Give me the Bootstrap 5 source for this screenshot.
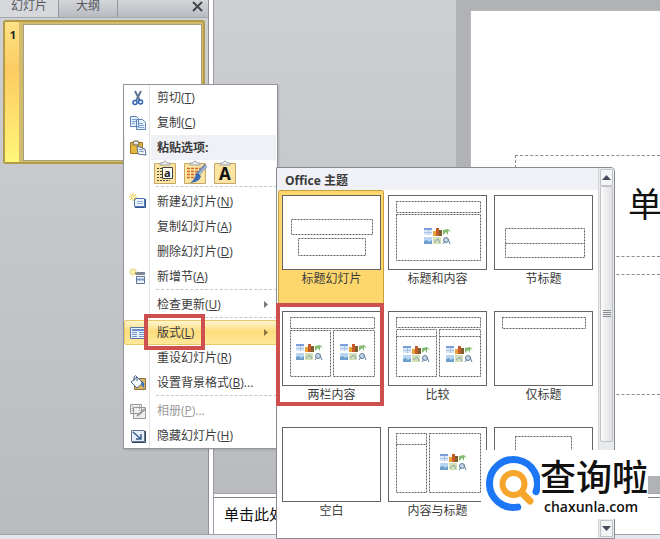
<!DOCTYPE html>
<html lang="zh-CN">
<head>
<meta charset="utf-8">
<meta name="viewport" content="width=device-width, initial-scale=1">
<title>版式</title>
<link rel="stylesheet" href="https://cdn.jsdelivr.net/npm/bootstrap@5.3.0/dist/css/bootstrap.min.css">
<style>
  body { font: 12px/16px "Open Sans", "Noto Sans CJK SC", sans-serif; color: #3b3b3b; background: #c7c9cd; }
  button { font: inherit; color: inherit; }
  svg { display: block; flex: none; }
  u { text-underline-offset: 1px; }

  .side-pane { width: 209px; border-right: 1px solid #8d9096; background: linear-gradient(#cfd1d5, #c5c7cb 40%, #b9bbbe); }
  .tab-strip { height: 18px; background: linear-gradient(#d3d5d9, #b8bbc0); border-bottom: 1px solid #a3a6ac; }
  .pane-tab { width: 59px; padding: 0 0 5px; border: 0; border-right: 1px solid #94979d; background: none; color: #55585e; line-height: 12px; }
  .pane-tab.active { background: #d6d8dc; }
  .pane-close { padding: 0 5px 5px; border: 0; background: none; }
  .slide-item { margin: 2px 3px; height: 144px; border: 2px solid #b39c48; border-radius: 3px; background: #d2bb6c; }
  .slide-number { width: 14px; padding: 5px 0 0 2px; background: linear-gradient(#fde184, #fdcb62 35%, #fff67a); font-weight: 700; font-size: 11px; color: #222; text-align: center; }
  .slide-mini { margin: 2px 1px 1px 4px; border: 1px solid #a6a07e; background: #fff; }

  .splitter-v { width: 5px; background: #fff; border-right: 1px solid #989ba1; }
  .canvas { background: linear-gradient(#cdcfd3, #c3c5c9 50%, #b9bbbe); }
  .canvas-gap { width: 242px; }
  .slide-edge { background: #b0b2b6; padding: 10px 0 17px 14px; }
  .slide-page { background: #fff; border-left: 1px solid #b8b8b8; border-top: 1px solid #b8b8b8; padding: 144px 0 0 44px; color: #111; }
  .placeholder-box { border: 1px dashed #8c8c8c; border-right: 0; }
  .title-box { height: 102px; margin-bottom: 17px; font-size: 34px; font-weight: 400; padding-left: 112px; line-height: 96px; }
  .subtitle-box { height: 121px; }
  .splitter-h { height: 5px; background: #fff; border-top: 1px solid #a2a4a8; border-bottom: 1px solid #808287; }
  .notes { height: 36px; background: #fff; padding-left: 10px; font-size: 15px; color: #111; line-height: 32px; }
  .status { height: 5px; background: #e4e7ec; border-top: 1px solid #9fa2a8; }

  .context-menu { left: 123px; top: 84px; width: 155px; border: 1px solid #92959b; background: linear-gradient(90deg, #fff 25px, #e3e4e8 25px, #e3e4e8 26px, #fff 26px); box-shadow: 1px 1px 2px #0002; }
  .menu-row { height: 25px; width: 100%; padding: 0 0 0 4px; border: 1px solid transparent; background: none; white-space: nowrap; gap: 10px; text-align: left; }
  .menu-row svg { width: 18px; height: 18px; }
  .menu-row .arrow { width: 4px; height: 7px; margin-right: 8px; }
  .menu-head { background: linear-gradient(90deg, transparent 26px, #f0f1f6 26px); font-weight: 700; }
  .menu-row.hot { border-color: #e8c867; border-radius: 2px; background: linear-gradient(#fff6d0, #fddc7c 45%, #fee79a); }
  .menu-row:disabled { color: #9a9a9a; }
  .paste-row { height: 26px; padding-left: 30px; gap: 7px; }
  .paste-row button { border: 0; padding: 0; background: none; }
  .menu-sep { height: 3px; margin-left: 32px; border-top: 1px dashed #c4c6ca; }

  .gallery { left: 276px; top: 167px; bottom: 0; width: 339px; border: 1px solid #888b91; border-radius: 0 4px 0 0; background: #fff; }
  .gallery-head { height: 22px; padding: 4px 0 0 8px; background: #f0f1f6; font-weight: 700; line-height: 18px; }
  .gallery-grid { display: grid; grid-template-columns: repeat(3, 106px); grid-auto-rows: 116px; padding-left: 1px; }
  .layout-tile { padding: 4px 3px 0; border: 1px solid transparent; background: none; text-align: center; }
  .layout-tile.chosen { background: #fdd76c; border-color: #c9a13c; border-radius: 2px; }
  .layout-tile span { width: 99px; line-height: 17px; white-space: nowrap; }
  .thumb rect { fill: #fff; stroke: #636363; }
  .thumb > path { fill: none; stroke: #606060; stroke-dasharray: 2 1; }
  .scroll-rail { width: 16px; padding: 1px; background: #e9eaec; border-left: 1px solid #d3d5d8; }
  .scroll-rail button { border: 1px solid #c0c2c6; background: #f4f5f7; padding: 0; height: 17px; border-radius: 1px; }
  .scroll-knob { height: 256px; border: 1px solid #c0c2c6; border-radius: 2px; background: linear-gradient(90deg, #fafafa, #dfe0e3); }

  .callout-frame { border: 4px solid #cf4f4f; pointer-events: none; }
  .frame-menu { left: 144px; top: 314px; width: 61px; height: 36px; }
  .frame-tile { left: 276px; top: 303px; width: 108px; height: 103px; }

  .site-mark { left: 481px; top: 450px; width: 167px; height: 69px; background: #fff; color: #111; }
  .mark-name { font: 500 36px/44px "Noto Sans CJK SC", sans-serif; }
  .mark-url { font: 600 14px/20px "Open Sans", sans-serif; padding-left: 4px; }
</style>
<script src="https://cdn.jsdelivr.net/npm/bootstrap@5.3.0/dist/js/bootstrap.bundle.min.js"></script>
</head>
<body class="overflow-hidden">
<svg width="0" height="0" class="position-absolute" aria-hidden="true">
  <defs>
    <g id="content-icons" fill="none">
      <path d="M0 1h8v7H0z" fill="#dce8f7"/><path d="M0 1h8v2H0z" fill="#7c9fdb"/><path d="M0 5.500h8M4.500 3v5" stroke="#a9c2e6"/>
      <path d="M9 4h4v5H9z" fill="#e9a13a"/><path d="M12 1h3v8h-3z" fill="#c65a2c"/><path d="M15 3h3v6h-3z" fill="#7d5e2c"/>
      <path d="M19 3l5-1 3 3-3-1v4l-2-3-3 3z" fill="#83b971"/>
      <path d="M0 10h8v7H0z" fill="#b8d6f2"/><path d="M0 17v-3l3-1 2 2 3-2v4z" fill="#6e9fcc"/>
      <path d="M9 10h8v7H9z" fill="#d4dfb5"/><path d="M10 15l4-3 2 4" stroke="#7fa5b4"/>
      <circle cx="22" cy="13" r="2.500" fill="#c9d7e8" stroke="#60809e"/><path d="M19 17l2-3M24 12l2 5" stroke="#60809e"/>
    </g>
    <g id="clip-board"><path d="M.5 3.500h21v20H.5z" fill="#fbe3a2" stroke="#c9a764"/><path d="M6 5V3h3q2-4 4 0h3v2z" fill="#eef0f2" stroke="#9da0a5"/></g>
    <g id="spark"><path d="M4 0v8M0 4h8M1 1l6 6M7 1L1 7" stroke="#e8c640" stroke-width="1"/><circle cx="4" cy="4" r="1.500" fill="#fff9b8"/></g>
  </defs>
</svg>

<div class="vh-100 d-flex flex-column position-relative overflow-hidden">
  <main class="d-flex flex-grow-1 overflow-hidden">
    <aside class="side-pane flex-shrink-0">
      <div class="tab-strip d-flex align-items-stretch overflow-hidden">
        <button class="pane-tab active d-flex align-items-end justify-content-center" type="button">幻灯片</button>
        <button class="pane-tab d-flex align-items-end justify-content-center" type="button">大纲</button>
        <button class="pane-close ms-auto d-flex align-items-end" type="button" aria-label="关闭"><svg width="11" height="11" fill="none" stroke="#44474c" stroke-width="2"><path d="M1 1l9 9M10 1l-9 9"/></svg></button>
      </div>
      <div class="slide-item d-flex">
        <div class="slide-number">1</div>
        <div class="slide-mini flex-grow-1"></div>
      </div>
    </aside>
    <div class="splitter-v flex-shrink-0"></div>
    <section class="d-flex flex-column flex-grow-1 overflow-hidden">
      <div class="canvas d-flex flex-grow-1 overflow-hidden">
        <div class="canvas-gap flex-shrink-0"></div>
        <div class="slide-edge d-flex flex-grow-1 overflow-hidden">
          <div class="slide-page flex-grow-1 overflow-hidden">
            <div class="placeholder-box title-box">单</div>
            <div class="placeholder-box subtitle-box"></div>
          </div>
        </div>
      </div>
      <div class="splitter-h flex-shrink-0"></div>
      <div class="notes flex-shrink-0">单击此处</div>
    </section>
  </main>
  <footer class="status flex-shrink-0"></footer>

  <nav class="context-menu position-absolute" aria-label="幻灯片菜单">
    <button class="menu-row d-flex align-items-center" type="button"><svg viewBox="0 0 18 18" fill="none"><path d="M6 2l5 10M12 2L7 12" stroke="#5f7896" stroke-width="2"/><circle cx="6" cy="13.500" r="2" stroke="#2e62b5" stroke-width="1.500"/><circle cx="11.500" cy="13" r="2" stroke="#2e62b5" stroke-width="1.500"/></svg><span>剪切(<u>T</u>)</span></button>
    <button class="menu-row d-flex align-items-center" type="button"><svg viewBox="0 0 18 18" fill="#e4effb" stroke="#5b83b5"><path d="M1.500 2.500h6l2 2v8h-8zM7.500 5.500h6l3 3v7h-9z"/><path d="M3 5.500h4M3 7.500h4M3 9.500h3M9 9.500h5M9 11.500h6M9 13.500h6" stroke="#7ba4d8"/></svg><span>复制(<u>C</u>)</span></button>
    <div class="menu-row menu-head d-flex align-items-center"><svg viewBox="0 0 18 18"><path d="M1.500 3.500h12v11h-12z" fill="#e6b73e" stroke="#9c7422"/><path d="M4 4l1-2h4l1 2v2H4z" fill="#dfe3e8" stroke="#75602e"/><path d="M8 7l8 3 1 6-8-1z" fill="#fff" stroke="#526b8e"/><path d="M9.500 10l5 1M10 12l5 1" stroke="#6f94c4"/></svg><span>粘贴选项:</span></div>
    <div class="paste-row d-flex align-items-start">
      <button type="button" aria-label="使用目标主题"><svg width="23" height="24"><use href="#clip-board"/><path d="M3 8.500h5M3 11.500h5M3 14.500h5M3 17.500h5M3 20.500h13" stroke="#4b4b4b" stroke-dasharray="2 1"/><path d="M8.500 7.500h10v11h-10z" fill="#fff" stroke="#3e4146"/><text x="10" y="17" font-size="11" font-weight="700" fill="#222">a</text></svg></button>
      <button type="button" aria-label="保留源格式"><svg width="23" height="24"><use href="#clip-board"/><path d="M3 8.500h14M3 11.500h14M3 14.500h11M3 17.500h8" stroke="#d56b2b" stroke-width="1.500" stroke-dasharray="3 1"/><path d="M22 5L13 15" stroke="#788fb3" stroke-width="4"/><path d="M23 5l-8 9" stroke="#d3deee"/><path d="M14 13l3 3q-1 6-11 7 5-4 6-9z" fill="#3f6db4"/></svg></button>
      <button type="button" aria-label="只保留文本"><svg width="23" height="24"><use href="#clip-board"/><text x="5" y="20" font-size="17" font-weight="700" fill="#111">A</text></svg></button>
    </div>
    <div class="menu-sep"></div>
    <button class="menu-row d-flex align-items-center" type="button"><svg viewBox="0 0 18 18" fill="none"><path d="M5.500 5.500h10v8h-10z" fill="#edf3fc" stroke="#5476ae"/><path d="M8 8.500h6M8 10.500h6" stroke="#91add5"/><path d="M6 14.500h10.500V6" stroke="#31538e"/><use href="#spark"/></svg><span>新建幻灯片(<u>N</u>)</span></button>
    <button class="menu-row d-flex align-items-center" type="button"><svg viewBox="0 0 18 18"></svg><span>复制幻灯片(<u>A</u>)</span></button>
    <button class="menu-row d-flex align-items-center" type="button"><svg viewBox="0 0 18 18"></svg><span>删除幻灯片(<u>D</u>)</span></button>
    <button class="menu-row d-flex align-items-center" type="button"><svg viewBox="0 0 18 18" fill="none"><path d="M6 5.500h10" stroke="#7f8792" stroke-width="3"/><path d="M7.500 8.500h8v7h-8z" fill="#edf3fc" stroke="#5f7896"/><path d="M8 11.500h7" stroke="#7b98c7" stroke-width="2"/><use href="#spark"/></svg><span>新增节(<u>A</u>)</span></button>
    <div class="menu-sep"></div>
    <button class="menu-row d-flex align-items-center" type="button"><svg viewBox="0 0 18 18"></svg><span class="flex-grow-1">检查更新(<u>U</u>)</span><svg class="arrow" viewBox="0 0 4 7"><path d="M0 0l4 3.500L0 7z" fill="#777"/></svg></button>
    <div class="menu-sep"></div>
    <button class="menu-row hot d-flex align-items-center" type="button"><svg viewBox="0 0 18 18"><path d="M1.500 3.500h15v11h-15z" fill="#eef4fd" stroke="#5777ad"/><path d="M3 5h12v2H3z" fill="#668dcc"/><path d="M3 8.500h5M3 10.500h5M3 12.500h5M10 8.500h5M10 10.500h5M10 12.500h5" stroke="#7397d0"/></svg><span class="flex-grow-1">版式(<u>L</u>)</span><svg class="arrow" viewBox="0 0 4 7"><path d="M0 0l4 3.500L0 7z" fill="#8a7540"/></svg></button>
    <button class="menu-row d-flex align-items-center" type="button"><svg viewBox="0 0 18 18"></svg><span>重设幻灯片(<u>R</u>)</span></button>
    <button class="menu-row d-flex align-items-center" type="button"><svg viewBox="0 0 18 18" fill="none"><path d="M5.500 4.500h11v11h-11z" fill="#dfb65f" stroke="#86734a"/><path d="M2 8l6-5 6 6-6 5z" fill="#f6faff" stroke="#43658f"/><path d="M5 7V3q2-3 3 0v4" stroke="#4f6787"/><path d="M12 7q4 0 3 7-3-2-3-7z" fill="#3974bd"/></svg><span>设置背景格式(<u>B</u>)...</span></button>
    <div class="menu-sep"></div>
    <button class="menu-row d-flex align-items-center" type="button" disabled><svg viewBox="0 0 18 18" fill="#eee" stroke="#999"><path d="M4.500 5.500h12v11h-12zM1.500 2.500h11v9h-11z"/><path d="M3.500 4v6M10.500 4v5" stroke-dasharray="1 1"/><path d="M8 14l8-7" stroke-width="2"/></svg><span>相册(<u>P</u>)...</span></button>
    <button class="menu-row d-flex align-items-center" type="button"><svg viewBox="0 0 18 18" fill="none"><path d="M2.500 3.500h13v11h-13z" fill="#e5effb" stroke="#62748f"/><path d="M4 5l8 7M12 7v5H7" stroke="#3c5e8f" stroke-width="1.500"/><path d="M3 15.500h13.500V4" stroke="#39475c"/></svg><span>隐藏幻灯片(<u>H</u>)</span></button>
  </nav>

  <section class="gallery position-absolute d-flex overflow-hidden" aria-label="Office 主题">
    <div class="flex-grow-1">
      <div class="gallery-head">Office 主题</div>
      <div class="gallery-grid">
        <button class="layout-tile chosen d-flex flex-column" type="button"><svg class="thumb" width="99" height="75"><rect x=".5" y=".5" width="98" height="74"/><path d="M9.500 24.500h81v15h-81zM16.500 43.500h67v17h-67z"/></svg><span>标题幻灯片</span></button>
        <button class="layout-tile d-flex flex-column" type="button"><svg class="thumb" width="99" height="75"><rect x=".5" y=".5" width="98" height="74"/><path d="M8.500 6.500h84v11h-84zM8.500 19.500h84v46h-84z"/><use href="#content-icons" x="36" y="32"/></svg><span>标题和内容</span></button>
        <button class="layout-tile d-flex flex-column" type="button"><svg class="thumb" width="99" height="75"><rect x=".5" y=".5" width="98" height="74"/><path d="M11.500 33.500h79v29h-79zM11.500 48.500h79"/></svg><span>节标题</span></button>
        <button class="layout-tile d-flex flex-column" type="button"><svg class="thumb" width="99" height="75"><rect x=".5" y=".5" width="98" height="74"/><path d="M8.500 6.500h84v11h-84zM8.500 19.500h40v46h-40zM51.500 19.500h41v46h-41z"/><use href="#content-icons" x="14" y="32"/><use href="#content-icons" x="58" y="32"/></svg><span>两栏内容</span></button>
        <button class="layout-tile d-flex flex-column" type="button"><svg class="thumb" width="99" height="75"><rect x=".5" y=".5" width="98" height="74"/><path d="M8.500 6.500h84v10h-84zM8.500 18.500h40v47h-40zM51.500 18.500h41v47h-41zM8.500 25.500h40M51.500 25.500h41"/><use href="#content-icons" x="15" y="34"/><use href="#content-icons" x="58" y="34"/></svg><span>比较</span></button>
        <button class="layout-tile d-flex flex-column" type="button"><svg class="thumb" width="99" height="75"><rect x=".5" y=".5" width="98" height="74"/><path d="M8.500 6.500h83v11h-83z"/></svg><span>仅标题</span></button>
        <button class="layout-tile d-flex flex-column" type="button"><svg class="thumb" width="99" height="75"><rect x=".5" y=".5" width="98" height="74"/></svg><span>空白</span></button>
        <button class="layout-tile d-flex flex-column" type="button"><svg class="thumb" width="99" height="75"><rect x=".5" y=".5" width="98" height="74"/><path d="M8.500 6.500h30v59h-30zM8.500 17.500h30M41.500 6.500h51v59h-51z"/><use href="#content-icons" x="52" y="26"/></svg><span>内容与标题</span></button>
        <button class="layout-tile d-flex flex-column" type="button" aria-label="图片与标题"><svg class="thumb" width="99" height="75"><rect x=".5" y=".5" width="98" height="74"/><path d="M21.500 9.500h56v38h-56z"/></svg></button>
      </div>
    </div>
    <div class="scroll-rail d-flex flex-column">
      <button class="d-flex align-items-center justify-content-center" type="button" aria-label="向上"><svg width="9" height="5"><path d="M0 5l4.500-5L9 5z" fill="#444b5c"/></svg></button>
      <div class="scroll-knob d-flex align-items-center justify-content-center"><svg width="8" height="8" stroke="#888b90"><path d="M0 .5h8M0 2.500h8M0 4.500h8M0 6.500h8"/></svg></div>
      <button class="mt-auto d-flex align-items-center justify-content-center" type="button" aria-label="向下"><svg width="9" height="5"><path d="M0 0l4.500 5L9 0z" fill="#444b5c"/></svg></button>
    </div>
  </section>

  <div class="callout-frame frame-menu position-absolute"></div>
  <div class="callout-frame frame-tile position-absolute"></div>

  <div class="site-mark position-absolute d-flex align-items-center">
    <svg width="59" height="69" fill="none" stroke-linecap="round"><path d="M55 41.700A24 24 0 1 0 36.700 57.100" stroke="#1d77f5" stroke-width="7"/><circle cx="32.500" cy="34" r="11" stroke="#f5a52c" stroke-width="6"/><path d="M41 43l8 8" stroke="#f5a52c" stroke-width="7"/></svg>
    <div>
      <div class="mark-name text-nowrap">查询啦</div>
      <div class="mark-url">chaxunla.com</div>
    </div>
  </div>
</div>
</body>
</html>
